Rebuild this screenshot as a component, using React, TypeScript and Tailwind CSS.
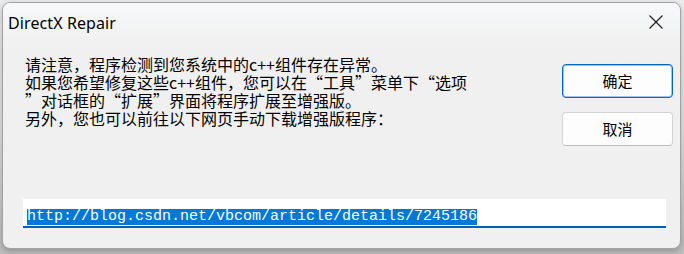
const lines = [
  "请注意，程序检测到您系统中的c++组件存在异常。",
  "如果您希望修复这些c++组件，您可以在“工具”菜单下“选项",
  "”对话框的“扩展”界面将程序扩展至增强版。",
  "另外，您也可以前往以下网页手动下载增强版程序：",
];

const App = () => {
  return (
    <div className="w-[684px] h-[254px] bg-gradient-to-b from-[#ededed] via-[#e2e2e2] to-[#bdbdbd] pt-[2px] pl-[2px] overflow-hidden">
      <div className="w-[679px] h-[247px] rounded-[8px] border border-[#a2a2a2] bg-[#f0f0f0] flex flex-col overflow-hidden shadow-[0_2px_6px_rgba(0,0,0,0.25)]">
        {/* title bar */}
        <div className="h-[38px] shrink-0 flex items-center justify-between pl-[5px] pr-[17px] bg-gradient-to-b from-[#f7f8fa] to-[#f1f1f1]">
          <span className="text-[16px] text-black font-['Segoe_UI','Noto_Sans',sans-serif] tracking-[0.1px] pt-[2px]">
            DirectX Repair
          </span>
          <svg width="14" height="14" viewBox="0 0 14 14" className="text-[#1a1a1a]">
            <path d="M0.5 0.5 L13.5 13.5 M13.5 0.5 L0.5 13.5" stroke="currentColor" strokeWidth="1.1" fill="none" />
          </svg>
        </div>

        <div className="flex items-start pt-[14px]">
          <div className="pl-[22px] font-['Noto_Sans_CJK_SC',sans-serif] text-[16px] leading-[18px] text-black">
            {lines.map((l) => (
              <div key={l} className="whitespace-nowrap">
                {l}
              </div>
            ))}
          </div>
          <div className="ml-auto mr-[7px] mt-[9px] flex flex-col gap-[14px] font-['Noto_Sans_CJK_SC',sans-serif] text-[15px] text-black">
            <button className="w-[111px] h-[34px] rounded-[4px] border border-[#0067c0] bg-[#fdfdfd] shadow-[inset_0_0_0_1px_#9fc3ea]">
              确定
            </button>
            <button className="w-[111px] h-[34px] rounded-[4px] border border-[#d3d3d3] border-b-[#bcbcbc] bg-[#fdfdfd]">
              取消
            </button>
          </div>
        </div>

        {/* url field */}
        <div className="ml-[20px] mt-[53px] w-[643px] h-[29px] bg-white border-b-2 border-[#005fb8] pl-[4px] pt-[3px]">
          <span className="inline-block bg-[#0078d7] text-white font-['Liberation_Mono',monospace] text-[15px] leading-[16px] h-[16px] whitespace-nowrap">
            http://blog.csdn.net/vbcom/article/details/7245186
          </span>
        </div>
      </div>
    </div>
  );
};

export default App;
